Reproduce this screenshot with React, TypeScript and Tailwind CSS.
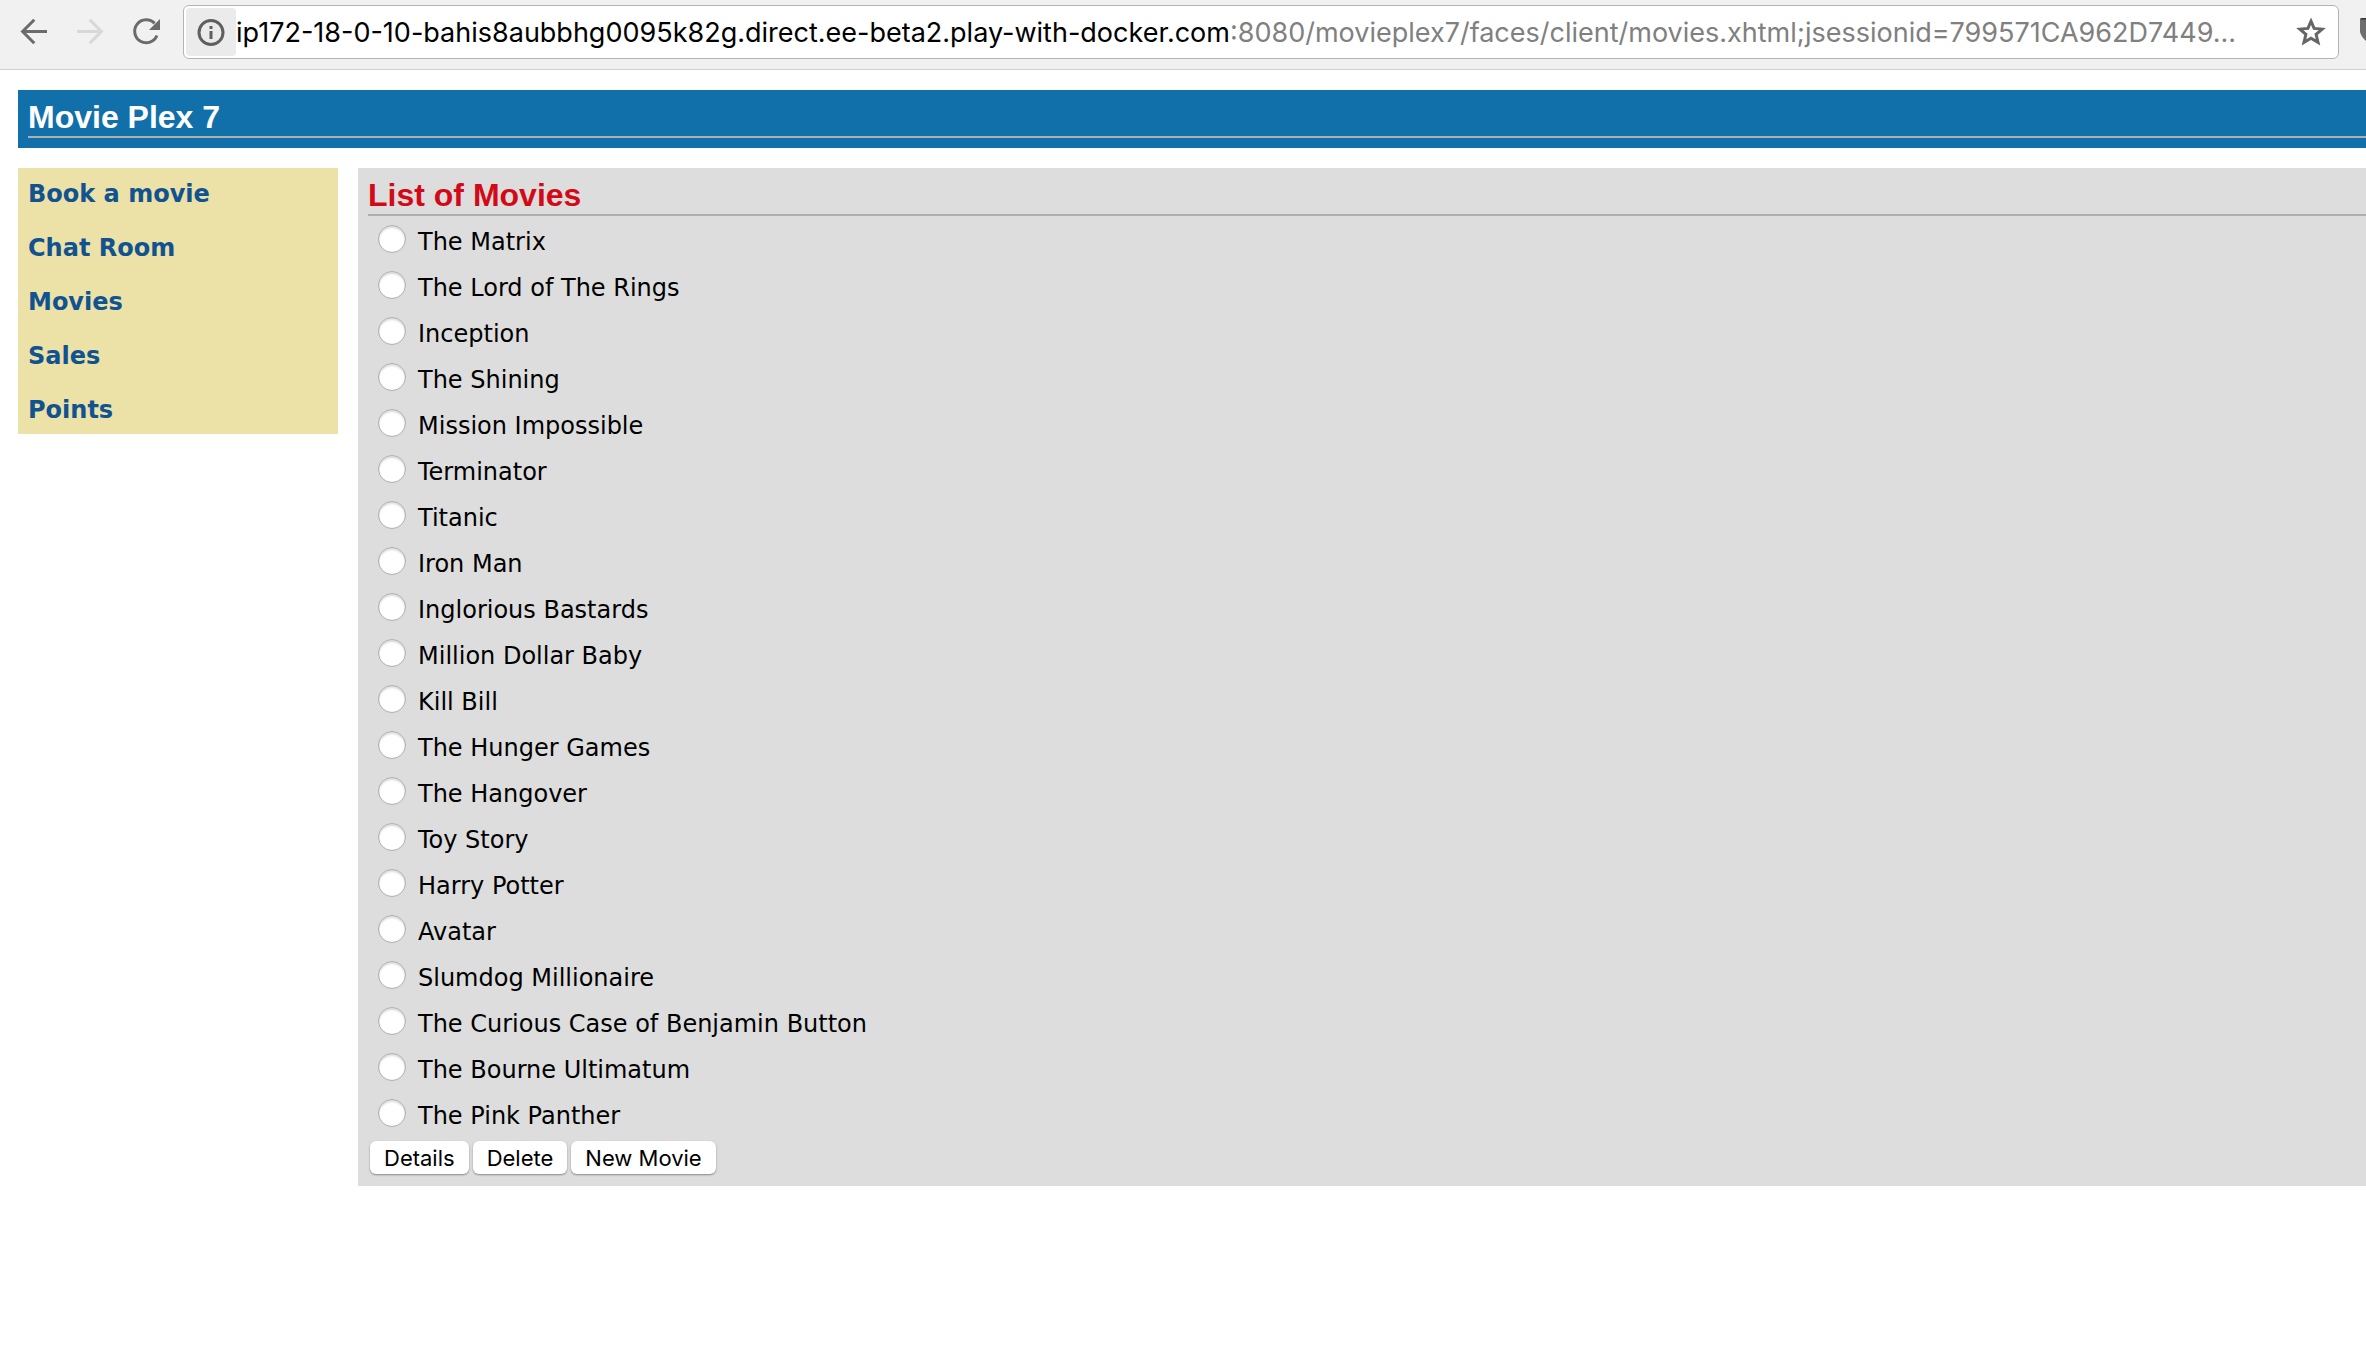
import React from "react";

const links = ["Book a movie", "Chat Room", "Movies", "Sales", "Points"];

const movies = [
  "The Matrix",
  "The Lord of The Rings",
  "Inception",
  "The Shining",
  "Mission Impossible",
  "Terminator",
  "Titanic",
  "Iron Man",
  "Inglorious Bastards",
  "Million Dollar Baby",
  "Kill Bill",
  "The Hunger Games",
  "The Hangover",
  "Toy Story",
  "Harry Potter",
  "Avatar",
  "Slumdog Millionaire",
  "The Curious Case of Benjamin Button",
  "The Bourne Ultimatum",
  "The Pink Panther",
];

function BrowserBar() {
  return (
    <div className="flex h-[70px] items-center overflow-hidden border-b border-[#cfcfcf] bg-[#f1f1f1] pt-[5px] pb-[10px]">
      <div className="flex shrink-0 items-center gap-7 pr-[23px] pl-5">
        <button aria-label="Back" className="text-[#6b6b6b]">
          <svg className="block size-7" viewBox="0 0 28 28" fill="none" stroke="currentColor" strokeWidth="3">
            <path d="M27 13.5H3M14.3 1.8L2.6 13.5L14.3 25.2" />
          </svg>
        </button>
        <button aria-label="Forward" className="text-[#d8d8d8]">
          <svg className="block size-7" viewBox="0 0 28 28" fill="none" stroke="currentColor" strokeWidth="3">
            <path d="M1 13.5H25M13.7 1.8L25.4 13.5L13.7 25.2" />
          </svg>
        </button>
        <button aria-label="Reload" className="text-[#6b6b6b]">
          <svg className="block size-7" viewBox="0 0 28 28">
            <path d="M22.6 5.4A11.5 11.5 0 1 0 24.9 17.5" fill="none" stroke="currentColor" strokeWidth="3" />
            <path d="M28 1V12H17Z" fill="currentColor" />
          </svg>
        </button>
      </div>
      <div className="flex h-[54px] min-w-0 flex-1 items-center rounded-md border border-[#b4b4b4] bg-white px-[2px] font-['Inter',sans-serif] text-[27px]">
        <button aria-label="Site information" className="flex h-12 w-[50px] shrink-0 items-center justify-center rounded bg-[#ebebeb]">
          <svg className="block size-7" viewBox="0 0 28 28" fill="none" stroke="#5f5f5f" strokeWidth="3">
            <circle cx="14" cy="14.5" r="12" />
            <path d="M14 13V21M14 8V11" />
          </svg>
        </button>
        <input
          aria-label="Host"
          defaultValue="ip172-18-0-10-bahis8aubbhg0095k82g.direct.ee-beta2.play-with-docker.com"
          className="shrink-0 pt-[2px] text-black outline-none [field-sizing:content]"
        />
        <input
          aria-label="Path"
          defaultValue=":8080/movieplex7/faces/client/movies.xhtml;jsessionid=799571CA962D7449..."
          className="min-w-0 flex-1 pt-[2px] text-[#808080] outline-none"
        />
        <button aria-label="Bookmark this page" className="mr-[10px] shrink-0">
          <svg className="block size-[30px]" viewBox="0 0 30 30" fill="none" stroke="#666" strokeWidth="3">
            <path d="M15 4.2L18.1 11.4L26.2 12.1L20.1 17.4L22 25.4L15 21.2L8 25.4L9.9 17.4L3.8 12.1L11.9 11.4Z" />
          </svg>
        </button>
      </div>
      <div className="w-[27px] shrink-0 overflow-hidden pl-[21px]">
        <svg className="block h-7 w-7" viewBox="0 0 28 28">
          <path d="M0 2Q0 0 2 0H26Q28 0 28 2V14Q26 22 14 28Q2 22 0 14Z" fill="#6e6e6e" />
          <path d="M0 2Q0 0 2 0H28V1.5H0Z" fill="#333" />
        </svg>
      </div>
    </div>
  );
}

function Heading({ as: Tag, color, children }: { as: "h1" | "h2"; color: string; children: React.ReactNode }) {
  return (
    <Tag className={`h-[38px] border-b-2 border-[#afafaf] font-['Liberation_Sans',Arial,sans-serif] text-[32px] leading-[34px] font-bold ${color}`}>
      {children}
    </Tag>
  );
}

function FormButton({ children }: { children: React.ReactNode }) {
  return <button className="rounded-md bg-white px-[14px] pt-px shadow-[0_1px_2px_#888]">{children}</button>;
}

export default function App() {
  return (
    <div className="min-h-screen bg-white font-['DejaVu_Sans',Verdana,sans-serif] text-black">
      <BrowserBar />
      <div className="flex flex-col gap-5 pt-5 pl-[18px]">
        <header className="bg-[#1170aa] py-[10px] pl-[10px]">
          <Heading as="h1" color="text-white">Movie Plex 7</Heading>
        </header>
        <div className="flex items-start gap-5">
          <nav className="flex w-80 shrink-0 flex-col items-start gap-6 bg-[#ece1a6] px-[10px] pt-[11px] pb-[9px] text-[24px] leading-[30px] font-bold text-[#115290]">
            {links.map((l) => (
              <a key={l} href="#">{l}</a>
            ))}
          </nav>
          <main className="min-w-0 flex-1 bg-[#dddddd] py-[10px] pl-[10px]">
            <Heading as="h2" color="text-[#d20a17]">List of Movies</Heading>
            <form onSubmit={(e) => e.preventDefault()}>
              <ul className="pb-px pl-[10px] text-[24px]">
                {movies.map((m) => (
                  <li key={m}>
                    <label className="flex h-[46px] w-fit items-center gap-3">
                      <input
                        type="radio"
                        name="movie"
                        className="size-7 appearance-none rounded-full border border-[#acacac] bg-white shadow-[inset_0_2px_2px_#dcdcdc] checked:border-8 checked:border-[#3b82f6]"
                      />
                      <span className="pt-1.5">{m}</span>
                    </label>
                  </li>
                ))}
              </ul>
              <div className="flex gap-1 pt-1 pb-[2px] pl-[2px] font-['Inter',sans-serif] text-[22px] leading-8">
                <FormButton>Details</FormButton>
                <FormButton>Delete</FormButton>
                <FormButton>New Movie</FormButton>
              </div>
            </form>
          </main>
        </div>
      </div>
    </div>
  );
}
